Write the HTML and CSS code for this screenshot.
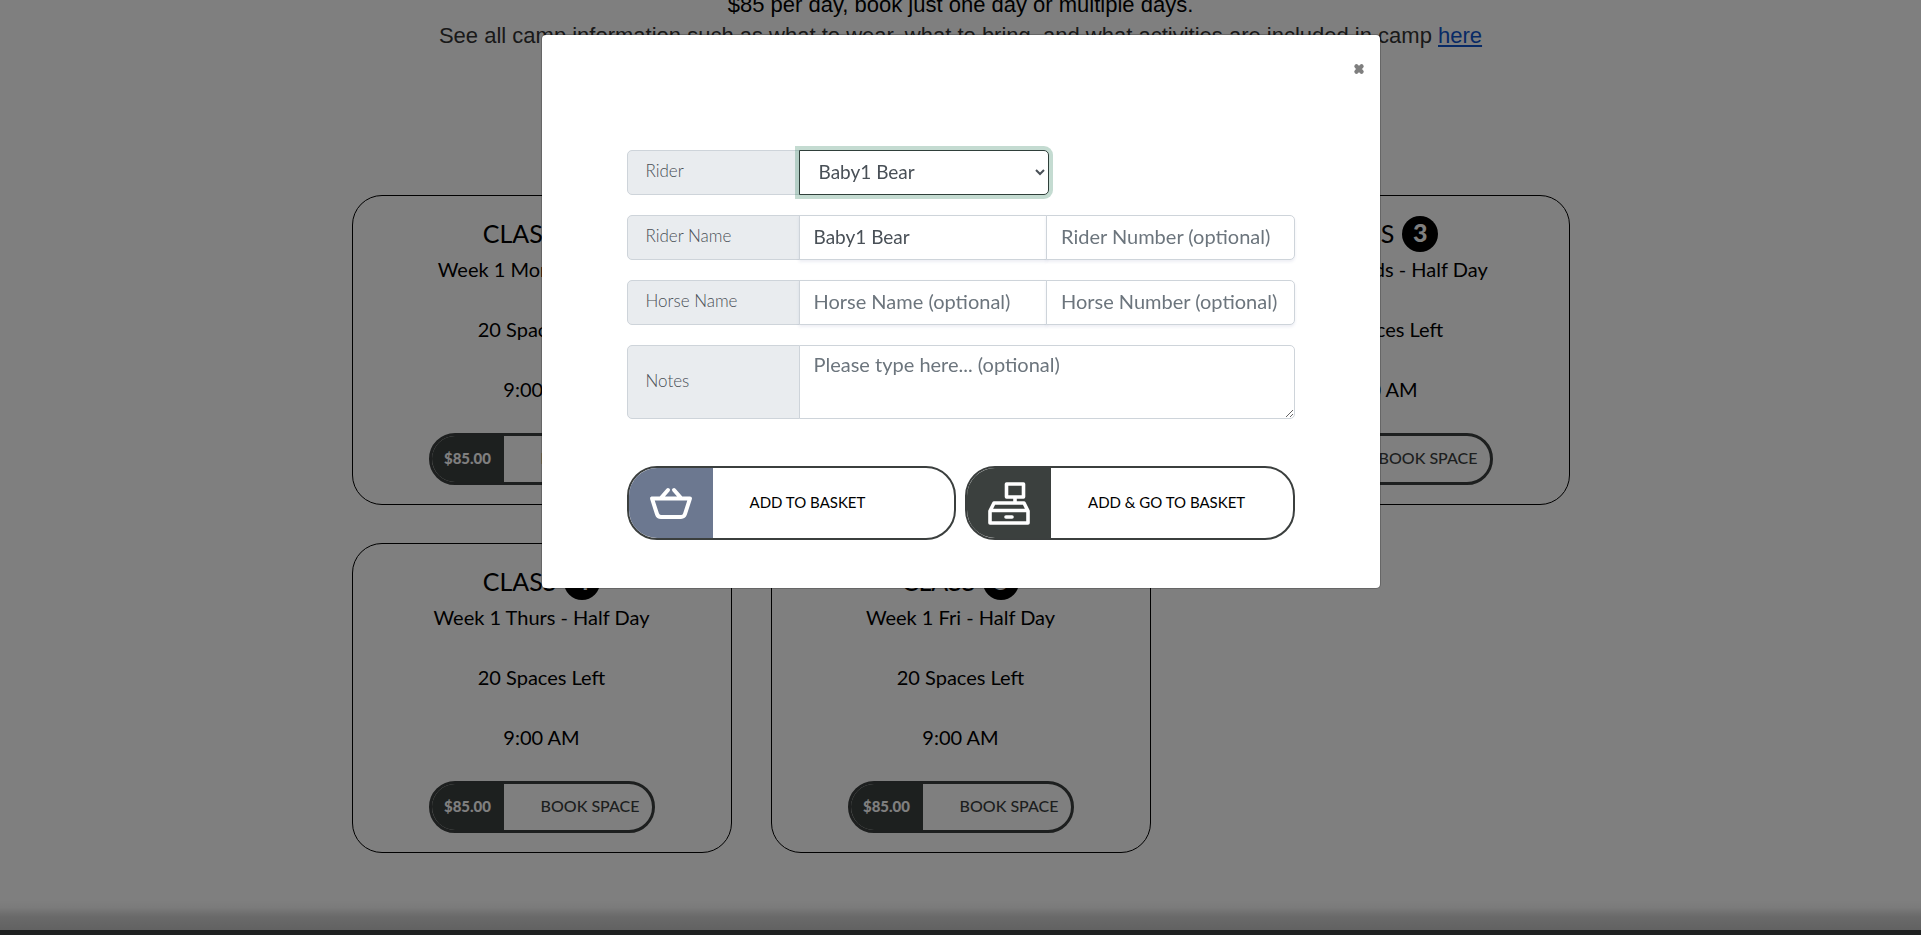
FILE: index.html
```html
<!DOCTYPE html>
<html lang="en">
<head>
<meta charset="utf-8">
<meta name="viewport" content="width=device-width, initial-scale=1">
<title>Book camp</title>
<link rel="stylesheet" href="styles.css">
</head>
<body>
<div class="page">
  <main class="content">
    <div class="intro">
      <p class="intro-price">$85 per day, book just one day or multiple days.</p>
      <p class="intro-info">See all camp information such as what to wear, what to bring, and what activities are included in camp <a href="#info">here</a></p>
    </div>
    <div class="classes">
      <article class="card">
        <h2 class="card-title">CLASS <span class="badge">1</span></h2>
        <p>Week 1 Mon - Half Day</p>
        <p>20 Spaces Left</p>
        <p>9:00 AM</p>
        <button class="book" type="button"><span class="price">$85.00</span><span class="book-text">BOOK SPACE</span></button>
      </article>
      <article class="card">
        <h2 class="card-title">CLASS <span class="badge">2</span></h2>
        <p>Week 1 Tues - Half Day</p>
        <p>20 Spaces Left</p>
        <p>9:00 AM</p>
        <button class="book" type="button"><span class="price">$85.00</span><span class="book-text">BOOK SPACE</span></button>
      </article>
      <article class="card">
        <h2 class="card-title">CLASS <span class="badge">3</span></h2>
        <p>Week 1 Weds - Half Day</p>
        <p>20 Spaces Left</p>
        <p>9:00 AM</p>
        <button class="book" type="button"><span class="price">$85.00</span><span class="book-text">BOOK SPACE</span></button>
      </article>
      <article class="card">
        <h2 class="card-title">CLASS <span class="badge">4</span></h2>
        <p>Week 1 Thurs - Half Day</p>
        <p>20 Spaces Left</p>
        <p>9:00 AM</p>
        <button class="book" type="button"><span class="price">$85.00</span><span class="book-text">BOOK SPACE</span></button>
      </article>
      <article class="card">
        <h2 class="card-title">CLASS <span class="badge">5</span></h2>
        <p>Week 1 Fri - Half Day</p>
        <p>20 Spaces Left</p>
        <p>9:00 AM</p>
        <button class="book" type="button"><span class="price">$85.00</span><span class="book-text">BOOK SPACE</span></button>
      </article>
    </div>
  </main>
  <footer class="footer"></footer>
</div>

<div class="overlay">
  <div class="modal" role="dialog" aria-modal="true" aria-label="Book a space">
    <div class="modal-head">
      <button class="close" type="button" aria-label="Close">
        <svg viewBox="0 0 12 12" width="12" height="12" aria-hidden="true"><path d="M3.4 3.200 8.6 8.800M8.6 3.200 3.4 8.800" stroke="currentColor" stroke-width="4.2" stroke-linecap="round"/></svg>
      </button>
    </div>
    <form class="form">
      <div class="row">
        <label class="label" for="rider">Rider</label>
        <select class="field select" id="rider"><option>Baby1 Bear</option></select>
      </div>
      <div class="row">
        <label class="label" for="rider-name">Rider Name</label>
        <input class="field" id="rider-name" type="text" value="Baby1 Bear">
        <input class="field last" type="text" placeholder="Rider Number (optional)" aria-label="Rider Number">
      </div>
      <div class="row">
        <label class="label" for="horse-name">Horse Name</label>
        <input class="field" id="horse-name" type="text" placeholder="Horse Name (optional)">
        <input class="field last" type="text" placeholder="Horse Number (optional)" aria-label="Horse Number">
      </div>
      <div class="row">
        <label class="label" for="notes">Notes</label>
        <textarea class="field notes last" id="notes" placeholder="Please type here... (optional)"></textarea>
      </div>
      <div class="actions">
        <button class="action" type="button">
          <span class="action-icon basket">
            <svg viewBox="0 0 44 34" width="44" height="34" fill="none" stroke="currentColor" stroke-width="4" stroke-linecap="round" stroke-linejoin="round" aria-hidden="true"><path d="M3 12.500H41L36 28Q35 31 32 31H12Q9 31 8 28L3 12.500ZM12 12 19 4M32 12 25 4"/></svg>
          </span>
          <span class="action-text">ADD TO BASKET</span>
        </button>
        <button class="action" type="button">
          <span class="action-icon till">
            <svg viewBox="0 0 44 44" width="44" height="44" fill="none" stroke="currentColor" stroke-width="3.600" stroke-linejoin="round" aria-hidden="true"><path d="M19.500 3H36.500V16H19.500ZM28 16V22M3 30 7 22H37L41 30V42H3ZM3 29.500H41"/><path d="M19 36H25" stroke-linecap="round"/></svg>
          </span>
          <span class="action-text">ADD &amp; GO TO BASKET</span>
        </button>
      </div>
    </form>
  </div>
</div>
</body>
</html>
```
FILE: styles.css
```css
* { box-sizing: border-box; }

body {
  margin: 0;
  background: #fff;
  color: #000;
  font-family: Lato, sans-serif;
  font-size: 20px;
  line-height: 30px;
}

button, input, select, textarea { font: inherit; }

p, h2 { margin: 0; }

.page {
  display: flex;
  flex-direction: column;
  height: 100vh;
  overflow: hidden;
}

.content {
  flex: 1;
  min-height: 0;
}

.intro {
  margin-top: -11px;
  font: 22px/31px "Liberation Sans", Arial, sans-serif;
  text-align: center;
}

.intro-info { color: #333; }
.intro-info a { color: #1155cc; }

.classes {
  display: grid;
  grid-template-columns: repeat(3, 1fr);
  gap: 38px 39px;
  width: 64%;
  max-width: 1218px;
  margin: 144px auto 0;
}

.card {
  display: flex;
  flex-direction: column;
  align-items: center;
  padding: 19px 16px;
  border: 1px solid #000;
  border-radius: 30px;
}

.card-title {
  display: flex;
  align-items: flex-start;
  gap: 8px;
  height: 38px;
  margin-bottom: 1px;
  padding-top: 1px;
  font-size: 25px;
  font-weight: 400;
  line-height: 34px;
}

.badge {
  width: 36px;
  height: 36px;
  border-radius: 50%;
  background: #000;
  color: #fff;
  font-weight: 900;
  line-height: 33px;
  text-align: center;
}

.card p { margin-bottom: 30px; }
.card p:last-of-type { margin-bottom: 29px; }

.book {
  display: flex;
  width: 226px;
  height: 52px;
  padding: 0;
  overflow: hidden;
  border: 3px solid #3b3f3e;
  border-radius: 26px;
  background: #fff;
  color: #3b3f3e;
  font-size: 16px;
  line-height: 44px;
}

.price {
  width: 72px;
  height: 46px;
  background: #3b403e;
  color: #fff;
  font-size: 15px;
  font-weight: 900;
}

.book-text {
  flex: 1;
  padding-right: 12px;
  font-weight: 500;
  text-align: right;
}

.footer {
  height: 35px;
  border-bottom: 5px solid #3c4040;
  background: linear-gradient(#fff, #f6f6f6 25%, #d4d4d4 55%, #c4c4c4);
}

.overlay {
  position: fixed;
  inset: 0;
  padding: 34px 16px;
  background: rgba(0, 0, 0, .5);
}

.modal {
  max-width: 840px;
  margin: 0 auto;
  padding: 0 85px 48px;
  border: 1px solid rgba(0, 0, 0, .2);
  border-radius: 5px;
  background: #fff;
  background-clip: padding-box;
}

.modal-head {
  display: flex;
  justify-content: flex-end;
  height: 115px;
  margin-right: -70px;
  padding-top: 28px;
}

.close {
  display: flex;
  width: 12px;
  height: 12px;
  padding: 0;
  border: 0;
  background: none;
  color: #7f7f7f;
}

.row {
  display: flex;
  margin-bottom: 20px;
}

.label {
  display: flex;
  align-items: center;
  width: 173px;
  padding: 0 0 3px 18px;
  border: 1px solid #ced4da;
  border-radius: 5px 0 0 5px;
  background: #e9ecef;
  color: #495057;
  font-size: 17px;
  font-weight: 300;
}

.field {
  flex: 1;
  min-width: 0;
  height: 45px;
  margin-left: -1px;
  padding: 5px 14px 8px;
  border: 1px solid #ced4da;
  border-radius: 0;
  background: #fff;
  box-shadow: 0 2px 3px rgba(60, 70, 130, .09);
  color: #495057;
  font-size: 19px;
}

.field::placeholder {
  color: #6c757d;
  font-size: 20px;
  opacity: 1;
}

.last { border-radius: 0 5px 5px 0; }

.select {
  flex: none;
  width: 250px;
  padding: 5px 0 8px 15px;
  border-color: #2f3f3a;
  border-radius: 0 5px 5px 0;
  box-shadow: 0 0 0 4px rgba(60, 137, 104, .3);
  outline: 0;
}

.notes {
  height: 74px;
  padding: 3px 14px;
  box-shadow: none;
  resize: vertical;
}

.actions {
  display: grid;
  grid-template-columns: 1fr 1fr;
  gap: 9px;
  padding-top: 27px;
}

.action {
  display: flex;
  height: 74px;
  padding: 0;
  overflow: hidden;
  border: 2px solid #3b3f3e;
  border-radius: 30px;
  background: #fff;
  color: #000;
  font-size: 15px;
}

.action-icon {
  display: flex;
  align-items: center;
  justify-content: center;
  width: 84px;
  height: 100%;
  color: #fff;
}

.basket { background: #6c7890; }
.till { background: #3b403e; }

.action-text {
  align-self: center;
  padding: 0 0 3px 37px;
}
```
